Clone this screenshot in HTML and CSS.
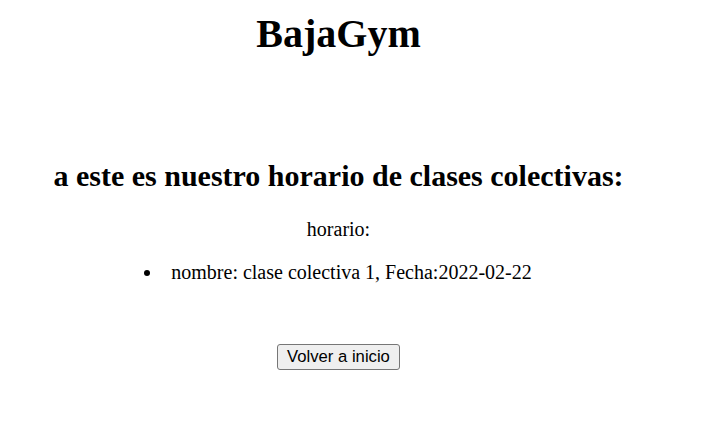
FILE: index.html
```html
<!DOCTYPE html>
<html lang="es">
<head>
<meta charset="utf-8">
<title>BajaGym</title>
<link rel="stylesheet" href="styles.css">
</head>
<body>
<div class="page">
  <h1 class="title">BajaGym</h1>
  <h2 class="subtitle">a este es nuestro horario de clases colectivas:</h2>
  <p class="label">horario:</p>
  <ul class="classes">
    <li class="class-item">nombre: clase colectiva 1, Fecha:2022-02-22</li>
  </ul>
  <div class="actions">
    <button class="back-btn" type="button">Volver a inicio</button>
  </div>
</div>
</body>
</html>
```
FILE: styles.css
```css
html, body {
  margin: 0;
  padding: 0;
  background: #ffffff;
}

body {
  font-family: "Liberation Serif", "Times New Roman", serif;
  font-size: 20px;
  color: #000000;
}

.page {
  width: 657px;
  padding: 10px;
  text-align: center;
}

.title {
  font-size: 40px;
  font-weight: bold;
  margin: 0 0 102px;
}

.subtitle {
  font-size: 30px;
  font-weight: bold;
  margin: 25px 0;
}

.label {
  margin: 20px 0;
}

.classes {
  margin: 20px 0 0;
  padding-left: 50px;
  list-style-position: inside;
}

.class-item {
  padding-right: 51px;
}

.actions {
  margin-top: 60px;
}

.back-btn {
  font-family: "Liberation Sans", Arial, sans-serif;
  font-size: 16.67px;
  color: #000000;
  background: #efefef;
  border: 1px solid #767676;
  border-radius: 3px;
  padding: 2px 9px;
}
```
